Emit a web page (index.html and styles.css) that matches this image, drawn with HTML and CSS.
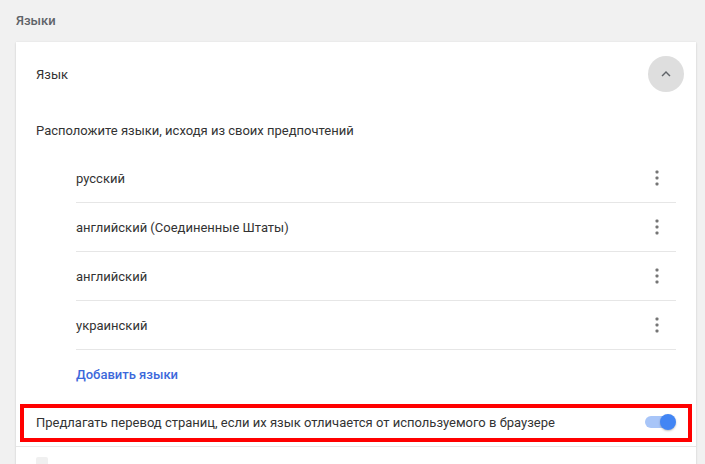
FILE: index.html
```html
<!DOCTYPE html>
<html lang="ru">
<head>
<meta charset="utf-8">
<title>Языки</title>
<link rel="stylesheet" href="styles.css">
</head>
<body>
<div class="page">
  <div class="section-title">Языки</div>
  <div class="card">
    <div class="header-row">
      <span>Язык</span>
      <button class="circle-btn" aria-label="Свернуть">
        <svg width="18" height="18" viewBox="0 0 24 24"><path d="M7.41 15.41L12 10.83l4.59 4.58L18 14l-6-6-6 6z" fill="#5f6368"/></svg>
      </button>
    </div>
    <div class="plain-row">Расположите языки, исходя из своих предпочтений</div>
    <div class="lang-list">
      <div class="lang-row"><span>русский</span><svg class="dots" width="24" height="24" viewBox="0 0 24 24"><rect x="10.5" y="4.5" width="3" height="3" rx="1"/><rect x="10.5" y="10.5" width="3" height="3" rx="1"/><rect x="10.5" y="16.5" width="3" height="3" rx="1"/></svg></div>
      <div class="lang-row"><span>английский (Соединенные Штаты)</span><svg class="dots" width="24" height="24" viewBox="0 0 24 24"><rect x="10.5" y="4.5" width="3" height="3" rx="1"/><rect x="10.5" y="10.5" width="3" height="3" rx="1"/><rect x="10.5" y="16.5" width="3" height="3" rx="1"/></svg></div>
      <div class="lang-row"><span>английский</span><svg class="dots" width="24" height="24" viewBox="0 0 24 24"><rect x="10.5" y="4.5" width="3" height="3" rx="1"/><rect x="10.5" y="10.5" width="3" height="3" rx="1"/><rect x="10.5" y="16.5" width="3" height="3" rx="1"/></svg></div>
      <div class="lang-row"><span>украинский</span><svg class="dots" width="24" height="24" viewBox="0 0 24 24"><rect x="10.5" y="4.5" width="3" height="3" rx="1"/><rect x="10.5" y="10.5" width="3" height="3" rx="1"/><rect x="10.5" y="16.5" width="3" height="3" rx="1"/></svg></div>
    </div>
    <div class="add-row"><a class="link" href="#">Добавить языки</a></div>
    <div class="toggle-row">
      <span>Предлагать перевод страниц, если их язык отличается от используемого в браузере</span>
      <span class="toggle"><span class="track"></span><span class="knob"></span></span>
      <span class="highlight"></span>
    </div>
    <div class="next-row"><span class="next-icon"></span></div>
  </div>
</div>
</body>
</html>
```
FILE: styles.css
```css
html, body {
  margin: 0;
  padding: 0;
  background: #f1f1f1;
  height: 100%;
  overflow: hidden;
}
body {
  font-family: Roboto, "Noto Sans", "Liberation Sans", sans-serif;
  font-size: 13px;
  color: #333;
}
.page {
  padding: 0 9px 0 16px;
}
.section-title {
  height: 41px;
  margin-bottom: 1px;
  display: flex;
  align-items: center;
  font-weight: 500;
  color: #5f6368;
  font-size: 13px;
}
.card {
  width: 680px;
  background: #fff;
  box-shadow: 0 1px 2px rgba(0,0,0,0.12), 0 0 2px rgba(0,0,0,0.06);
}
.header-row {
  height: 64px;
  display: flex;
  align-items: center;
  justify-content: space-between;
  padding: 0 12px 0 20px;
}
.circle-btn {
  width: 36px;
  height: 36px;
  border-radius: 50%;
  border: none;
  padding: 0;
  background: #dedede;
  display: flex;
  align-items: center;
  justify-content: center;
}
.plain-row {
  height: 48px;
  display: flex;
  align-items: center;
  padding-left: 20px;
}
.lang-list {
  margin: 0 20px 0 60px;
}
.lang-row {
  height: 48px;
  display: flex;
  align-items: center;
  justify-content: space-between;
  border-bottom: 1px solid #e6e6e6;
}
.dots {
  margin-right: 7px;
  fill: #757575;
}
.add-row {
  height: 48px;
  display: flex;
  align-items: center;
  padding-left: 60px;
}
.link {
  color: #3c68db;
  font-weight: 500;
  text-decoration: none;
}
.toggle-row {
  position: relative;
  height: 48px;
  display: flex;
  align-items: center;
  justify-content: space-between;
  padding: 0 20px;
  border-bottom: 1px solid #e6e6e6;
}
.toggle {
  position: relative;
  width: 31px;
  height: 16px;
  display: flex;
  align-items: center;
}
.track {
  width: 30px;
  height: 12px;
  border-radius: 6px;
  background: #a8c5f8;
}
.knob {
  position: absolute;
  right: 0;
  top: 0;
  width: 16px;
  height: 16px;
  border-radius: 50%;
  background: #4285f4;
  box-shadow: 0 1px 2px rgba(0,0,0,0.25);
}
.highlight {
  position: absolute;
  top: 6px;
  left: 4px;
  right: 4px;
  bottom: 4px;
  border: 4px solid #ff0000;
  pointer-events: none;
}
.next-row {
  height: 48px;
  padding: 10px 0 0 20px;
  box-sizing: border-box;
}
.next-icon {
  display: block;
  width: 12px;
  height: 12px;
  border-radius: 2px;
  background: #f0f0f0;
}
```
